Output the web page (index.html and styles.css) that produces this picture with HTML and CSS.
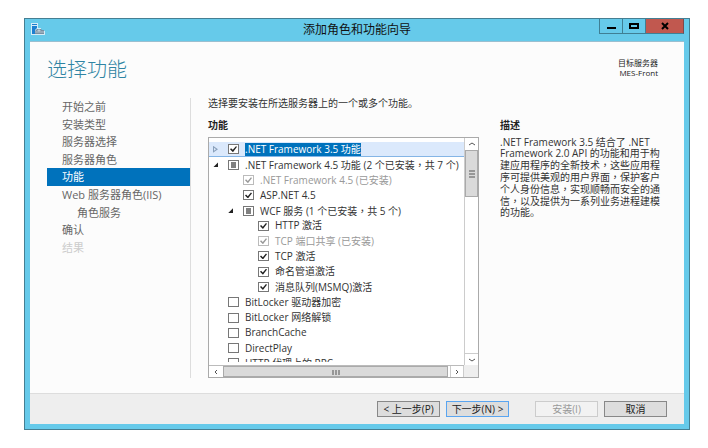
FILE: index.html
```
<!DOCTYPE html>
<html lang="zh-CN">
<head>
    <meta charset="UTF-8"/>
    <title>添加角色和功能向导</title>
    <link rel="stylesheet" href="styles.css">
</head>
<body>
<div class="window">
    <div class="titlebar">
        <svg class="app-icon" viewBox="0 0 14 12">
            <path d="M0 0h7v5h3v2l4 1v4H0z" fill="#d5ecf7"/>
            <path d="M1 1h5v1H1zM1 3h5v2L4 7v4H1z" fill="#1d7fd0"/>
            <path d="M4 8l2-2h4l1 1h2v4H4z" fill="#7890a3"/>
            <path d="M7 7h2v1H7zM4 9h9" fill="#d5ecf7" stroke="#b4c6d2" stroke-width="1"/>
        </svg>
        <span class="title">添加角色和功能向导</span>
        <div class="window-buttons">
            <button aria-label="最小化"><svg viewBox="0 0 12 8"><path d="M2 6h9" stroke="#000" stroke-width="2"/></svg></button>
            <button aria-label="最大化"><svg viewBox="0 0 12 8"><path d="M2 2h8v4H2z" fill="none" stroke="#000" stroke-width="2"/></svg></button>
            <button class="close" aria-label="关闭"><svg viewBox="0 0 12 8"><path d="M3 1l6 6M9 1L3 7" stroke="#000" stroke-width="2"/></svg></button>
        </div>
    </div>
    <div class="client">
        <header>
            <h1>选择功能</h1>
            <div class="target">
                <div>目标服务器</div>
                <div>MES-Front</div>
            </div>
        </header>
        <main>
            <nav>
                <ul>
                    <li><a href="#before">开始之前</a></li>
                    <li><a href="#type">安装类型</a></li>
                    <li><a href="#server">服务器选择</a></li>
                    <li><a href="#roles">服务器角色</a></li>
                    <li><a href="#features" class="current">功能</a></li>
                    <li><a href="#iis">Web 服务器角色(IIS)</a></li>
                    <li><a href="#services" class="sub">角色服务</a></li>
                    <li><a href="#confirm">确认</a></li>
                    <li><a class="disabled">结果</a></li>
                </ul>
            </nav>
            <section class="features">
                <p>选择要安装在所选服务器上的一个或多个功能。</p>
                <h2>功能</h2>
                <div class="tree">
                    <div class="viewport">
                        <ul>
                            <li class="selected"><span class="arrow closed"></span><input type="checkbox" id="f1" checked><label for="f1">.NET Framework 3.5 功能</label></li>
                            <li><span class="arrow open"></span><input type="checkbox" id="f2" class="partial"><label for="f2">.NET Framework 4.5 功能 (2 个已安装<span lang="zh-TW">，</span>共 7 个)</label></li>
                            <li class="level2"><span class="arrow"></span><input type="checkbox" id="f3" checked disabled><label for="f3">.NET Framework 4.5 (已安装)</label></li>
                            <li class="level2"><span class="arrow"></span><input type="checkbox" id="f4" checked><label for="f4">ASP.NET 4.5</label></li>
                            <li class="level2"><span class="arrow open"></span><input type="checkbox" id="f5" class="partial"><label for="f5">WCF 服务 (1 个已安装<span lang="zh-TW">，</span>共 5 个)</label></li>
                            <li class="level3"><span class="arrow"></span><input type="checkbox" id="f6" checked><label for="f6">HTTP 激活</label></li>
                            <li class="level3"><span class="arrow"></span><input type="checkbox" id="f7" checked disabled><label for="f7">TCP 端口共享 (已安装)</label></li>
                            <li class="level3"><span class="arrow"></span><input type="checkbox" id="f8" checked><label for="f8">TCP 激活</label></li>
                            <li class="level3"><span class="arrow"></span><input type="checkbox" id="f9" checked><label for="f9">命名管道激活</label></li>
                            <li class="level3"><span class="arrow"></span><input type="checkbox" id="f10" checked><label for="f10">消息队列(MSMQ)激活</label></li>
                            <li><span class="arrow"></span><input type="checkbox" id="f11"><label for="f11">BitLocker 驱动器加密</label></li>
                            <li><span class="arrow"></span><input type="checkbox" id="f12"><label for="f12">BitLocker 网络解锁</label></li>
                            <li><span class="arrow"></span><input type="checkbox" id="f13"><label for="f13">BranchCache</label></li>
                            <li><span class="arrow"></span><input type="checkbox" id="f14"><label for="f14">DirectPlay</label></li>
                            <li><span class="arrow"></span><input type="checkbox" id="f15"><label for="f15">HTTP 代理上的 RPC</label></li>
                        </ul>
                    </div>
                    <div class="scroll-y">
                        <button aria-label="向上滚动"><svg viewBox="0 0 8 8"><path d="M1 5l3-2 3 2"/></svg></button>
                        <div class="thumb"><svg viewBox="0 0 8 8"><path d="M1 1h6M1 4h6M1 7h6"/></svg></div>
                        <button class="end" aria-label="向下滚动"><svg viewBox="0 0 8 8"><path d="M1 3l3 2 3-2"/></svg></button>
                    </div>
                    <div class="scroll-x">
                        <button aria-label="向左滚动"><svg viewBox="0 0 8 8"><path d="M5 2L3 4l2 2"/></svg></button>
                        <div class="thumb"><svg viewBox="0 0 8 8"><path d="M1 2v5M4 2v5M7 2v5"/></svg></div>
                        <button class="end" aria-label="向右滚动"><svg viewBox="0 0 8 8"><path d="M3 2l2 2-2 2"/></svg></button>
                    </div>
                    <div class="corner"></div>
                </div>
            </section>
            <section class="description">
                <h2>描述</h2>
                <p>.NET Framework 3.5 结合了 .NET Framework 2.0 API 的功能和用于构建应用程序的全新技术<span lang="zh-TW">，</span>这些应用程序可提供美观的用户界面<span lang="zh-TW">，</span>保护客户个人身份信息<span lang="zh-TW">，</span>实现顺畅而安全的通信<span lang="zh-TW">，</span>以及提供为一系列业务进程建模的功能。</p>
            </section>
        </main>
        <footer>
            <button>&lt; 上一步(P)</button>
            <button class="default">下一步(N) &gt;</button>
            <button class="install" disabled>安装(I)</button>
            <button>取消</button>
        </footer>
    </div>
</div>
</body>
</html>
```
FILE: styles.css
```
* {
    box-sizing: border-box;
}

body {
    display: flex;
    min-height: 100vh;
    margin: 0;
    padding: 18px 18px 18px 24px;
    background-color: #fff;
    color: #333;
    font-family: "Open Sans", "Noto Sans CJK SC", sans-serif;
    font-size: 10px;
    line-height: 11px;
}

h1, h2, p, ul {
    margin: 0;
    padding: 0;
}

ul {
    list-style-type: none;
}

button {
    padding: 0;
    color: #222;
    font-family: inherit;
    font-size: 10px;
    line-height: 12px;
}

/* centred comma */
[lang="zh-TW"] {
    font-family: "Noto Sans CJK TC", sans-serif;
}

/* Window frame */
.window {
    flex: 1;
    display: flex;
    flex-direction: column;
    min-width: 0;
    padding: 0 5px 5px;
    border: 1px solid #457f93;
    background-color: #66caea;
}

.titlebar {
    display: grid;
    grid-template-columns: 1fr auto 1fr;
    height: 22px;
}

.app-icon {
    width: 14px;
    height: 12px;
    margin: 4px 1px;
}

.title {
    color: #111;
    font-size: 12px;
    line-height: 22px;
}

.window-buttons {
    display: flex;
    justify-content: flex-end;
    height: 15px;
}

.window-buttons button {
    width: 23px;
    border: 1px solid #3f7f94;
    border-top: 0;
    border-right: 0;
    background-color: #66caea;
}

.window-buttons .close {
    width: 39px;
    border-right: 1px solid #7d4a4d;
    background-color: #c1584f;
}

.window-buttons svg {
    display: block;
    width: 12px;
    height: 8px;
    margin: 0 auto;
}

.client {
    flex: 1;
    display: flex;
    flex-direction: column;
    background-color: #fcfcfc;
    border-top: 1px solid #9bbfd0;
}

header {
    display: flex;
    justify-content: space-between;
    height: 56px;
    padding: 16px 26px 0 17px;
}

h1 {
    color: #2f84a3;
    font-size: 20px;
    font-weight: 300;
    line-height: 24px;
}

.target {
    color: #222;
    font-size: 8px;
    line-height: 10px;
    text-align: right;
}

main {
    flex: 1;
    display: grid;
    grid-template-columns: 144px 271px 1fr;
    column-gap: 17px;
    padding: 0 21px 15px 17px;
}

/* Wizard steps */
nav {
    border-right: 1px solid #ddd;
}

nav ul {
    display: grid;
    grid-auto-rows: 1fr;
    height: 158px;
}

nav a {
    display: flex;
    align-items: center;
    height: 100%;
    padding-left: 15px;
    color: #666;
    font-size: 11px;
    text-decoration: none;
    white-space: nowrap;
}

nav .current {
    background-color: #0072bc;
    color: #fff;
}

nav .sub {
    padding-left: 30px;
}

nav .disabled {
    color: #ccc;
}

h2 {
    color: #222;
    font-size: 10px;
    font-weight: 600;
    line-height: 11px;
}

.features {
    display: flex;
    flex-direction: column;
}

.features h2 {
    margin: 11px 0 6px;
}

/* Feature tree */
.tree {
    flex: 1;
    display: grid;
    grid-template-columns: 1fr 14px;
    grid-template-rows: 1fr 12px;
    border: 1px solid #aaa;
    background-color: #fff;
}

.viewport {
    height: 220px;
    margin-top: 4px;
    overflow: hidden;
}

.viewport ul {
    display: grid;
    grid-auto-rows: 1fr;
    height: 229px;
}

.viewport li {
    display: flex;
    align-items: center;
    padding-left: 4px;
    white-space: nowrap;
}

.viewport .level2 {
    padding-left: 19px;
}

.viewport .level3 {
    padding-left: 34px;
}

.viewport .selected {
    border-bottom: 1px solid #84b5e6;
    background-color: #dbe9fc;
}

.selected label {
    background-color: #0072bc;
    color: #fff;
}

.viewport label {
    line-height: 13px;
}

.arrow {
    width: 5px;
    height: 5px;
    margin-right: 10px;
}

.arrow.open {
    background-color: #222;
    clip-path: polygon(100% 0, 100% 100%, 0 100%);
}

.arrow.closed {
    height: 7px;
    background-color: #8aa0bb;
    clip-path: polygon(0 0, 100% 50%, 0 100%, 0 0, 1px 2px, 1px 5px, 3px 50%, 1px 2px);
}

input[type="checkbox"] {
    -webkit-appearance: none;
    appearance: none;
    flex: none;
    width: 11px;
    height: 10px;
    margin: 0 6px 0 0;
    border: 1px solid #777;
    background-color: #fff;
}

input[type="checkbox"]:checked::before {
    content: "";
    display: block;
    width: 7px;
    height: 6px;
    margin: 1px;
    background-color: #222;
    clip-path: polygon(0 50%, 15% 35%, 40% 62%, 85% 0, 100% 12%, 42% 100%);
}

input[type="checkbox"].partial::before {
    content: "";
    display: block;
    height: 6px;
    margin: 1px 2px;
    background-color: #808080;
}

input[type="checkbox"]:disabled {
    border-color: #bbb;
}

input[type="checkbox"]:disabled::before {
    background-color: #999;
}

input:disabled + label {
    color: #999;
}

/* Scroll bars */
.scroll-y, .scroll-x {
    display: flex;
    background-color: #fff;
}

.scroll-y {
    flex-direction: column;
    border-left: 1px solid #ccc;
}

.scroll-x {
    border-top: 1px solid #bbb;
}

.scroll-y button, .scroll-x button {
    display: flex;
    align-items: center;
    justify-content: center;
    border: 0;
    background-color: #fff;
}

.scroll-y button {
    height: 12px;
}

.scroll-x button {
    width: 14px;
}

.thumb {
    display: flex;
    align-items: center;
    justify-content: center;
    border: 1px solid #aaa;
    background-color: #dadada;
}

.scroll-y .thumb {
    height: 47px;
}

.scroll-x .thumb {
    flex: 1;
    margin-right: 2px;
}

.scroll-y .end {
    margin-top: auto;
    border-top: 1px solid #ccc;
}

.scroll-x .end {
    border-left: 1px solid #ccc;
    border-right: 1px solid #ccc;
}

.scroll-y svg, .scroll-x svg {
    width: 8px;
    height: 8px;
    fill: none;
    stroke: #555;
}

.corner {
    background-color: #eee;
}

.description {
    padding-top: 22px;
    padding-left: 4px;
}

.description p {
    margin-top: 6px;
}

footer {
    display: flex;
    justify-content: flex-end;
    gap: 6px;
    height: 31px;
    padding: 7px 17px;
    border-top: 1px solid #ddd;
    background-color: #eee;
}

footer button {
    width: 63px;
    height: 16px;
    border: 1px solid #888;
    background-color: #ddd;
}

footer .default {
    border-color: #5aa5f0;
}

footer .install {
    margin-left: 20px;
    border-color: #ccc;
    background-color: #f2f2f2;
    color: #999;
}
```
